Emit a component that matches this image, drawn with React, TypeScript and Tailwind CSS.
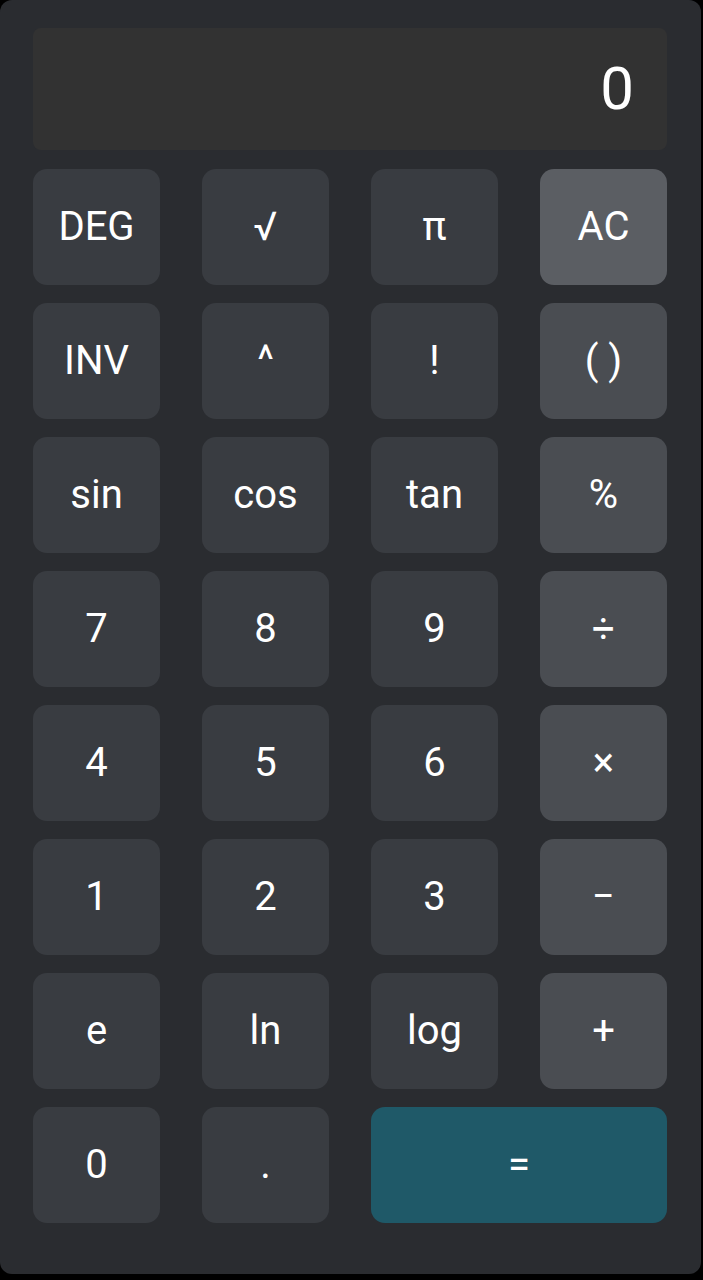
const keys: { label: string; kind: "num" | "op" | "ac" | "eq" }[] = [
  { label: "DEG", kind: "num" },
  { label: "√", kind: "num" },
  { label: "π", kind: "num" },
  { label: "AC", kind: "ac" },
  { label: "INV", kind: "num" },
  { label: "^", kind: "num" },
  { label: "!", kind: "num" },
  { label: "( )", kind: "op" },
  { label: "sin", kind: "num" },
  { label: "cos", kind: "num" },
  { label: "tan", kind: "num" },
  { label: "%", kind: "op" },
  { label: "7", kind: "num" },
  { label: "8", kind: "num" },
  { label: "9", kind: "num" },
  { label: "÷", kind: "op" },
  { label: "4", kind: "num" },
  { label: "5", kind: "num" },
  { label: "6", kind: "num" },
  { label: "×", kind: "op" },
  { label: "1", kind: "num" },
  { label: "2", kind: "num" },
  { label: "3", kind: "num" },
  { label: "−", kind: "op" },
  { label: "e", kind: "num" },
  { label: "ln", kind: "num" },
  { label: "log", kind: "num" },
  { label: "+", kind: "op" },
  { label: "0", kind: "num" },
  { label: ".", kind: "num" },
  { label: "=", kind: "eq" },
];

const kindClass = {
  num: "bg-[#393c41]",
  op: "bg-[#4a4d52]",
  ac: "bg-[#5b5e63]",
  eq: "bg-[#1f5968] col-span-2",
};

export default function App() {
  return (
    <div className="min-h-screen bg-black" style={{ fontFamily: "Roboto, 'Noto Sans', sans-serif" }}>
      <div className="w-[701px] h-[1274px] rounded-xl bg-[#2a2c30] pt-[28px] pl-[33px]">
        {/* display */}
        <div className="w-[634px] h-[122px] rounded-lg bg-[#323232] flex items-center justify-end pr-[33px]">
          <span className="text-[60px] leading-none text-white">0</span>
        </div>

        <div className="mt-[19px] grid grid-cols-[repeat(4,127px)] auto-rows-[116px] gap-x-[42px] gap-y-[18px]">
          {keys.map((k) => (
            <button
              key={k.label}
              className={`${kindClass[k.kind]} rounded-[14px] flex items-center justify-center text-[40px] leading-none text-white`}
            >
              {k.label}
            </button>
          ))}
        </div>
      </div>
    </div>
  );
}
